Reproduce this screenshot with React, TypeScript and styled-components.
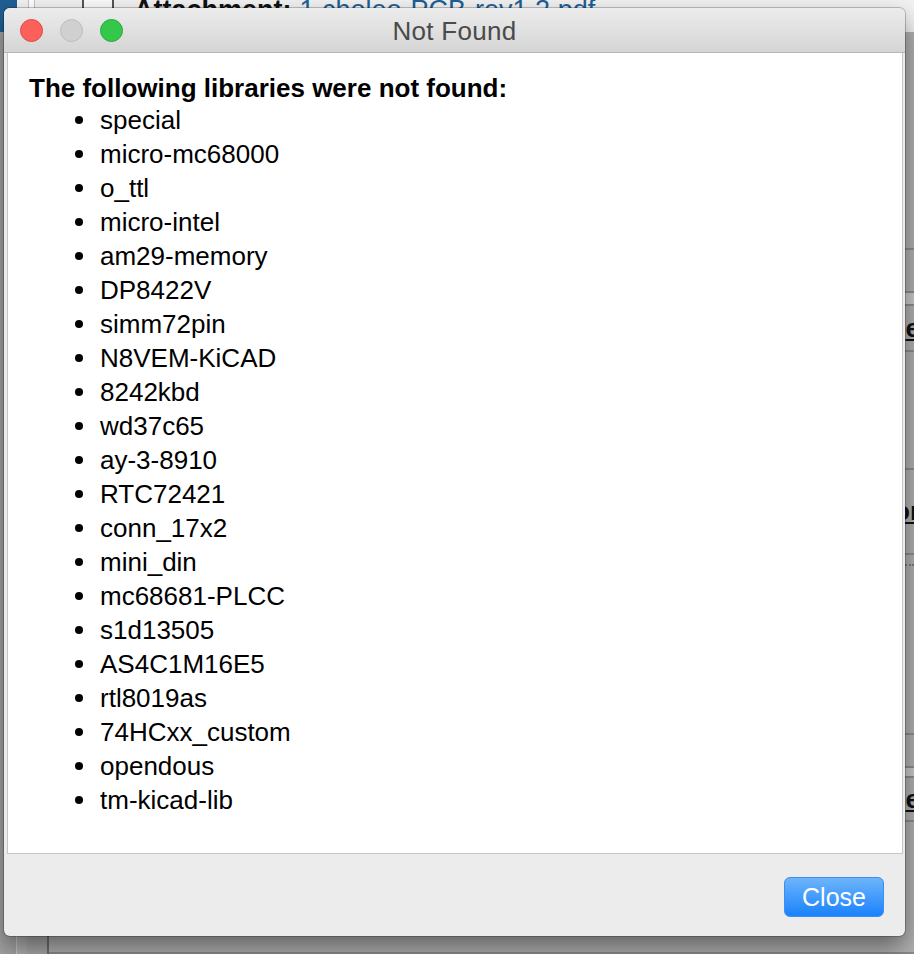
import React from 'react';
import styled, { createGlobalStyle } from 'styled-components';

const GlobalStyle = createGlobalStyle`
  html, body {
    margin: 0;
    padding: 0;
    background: #a9a9a9;
  }
  body {
    font-family: "Liberation Sans", Arial, sans-serif;
  }
`;

const missingLibs = [
  'special',
  'micro-mc68000',
  'o_ttl',
  'micro-intel',
  'am29-memory',
  'DP8422V',
  'simm72pin',
  'N8VEM-KiCAD',
  '8242kbd',
  'wd37c65',
  'ay-3-8910',
  'RTC72421',
  'conn_17x2',
  'mini_din',
  'mc68681-PLCC',
  's1d13505',
  'AS4C1M16E5',
  'rtl8019as',
  '74HCxx_custom',
  'opendous',
  'tm-kicad-lib',
];

// rows of the app window lying behind the dialog (only a sliver shows on the right)
const backRows: Array<{ h: number, text?: string, dotted?: boolean, shade?: boolean }> = [
  { h: 218 },
  { h: 43 },
  { h: 13, shade: true },
  { h: 46, text: 'e' },
  { h: 118 },
  { h: 85, text: 'or' },
  { h: 180, dotted: true },
  { h: 33 },
  { h: 10, shade: true },
  { h: 44, text: 'e' },
  { h: 132 },
];

export default function App() {
  return (
    <Page>
      <GlobalStyle />
      <Backdrop>
        <BackHeader>
          <SideStub />
          <HeaderRule />
          <FileIcon width="36" height="40" viewBox="0 0 36 40">
            <path d="M3 2 H24 L33 11 V38 H3 Z" fill="#fafafa" stroke="#555" strokeWidth="2" />
            <path d="M24 2 V11 H33" fill="none" stroke="#555" strokeWidth="2" />
          </FileIcon>
          <AttachLabel>Attachment:</AttachLabel>
          <AttachLink>1.choleo-PCB-rev1.2.pdf</AttachLink>
        </BackHeader>
        <BackBody>
          <BackGutter />
          <BackColumn />
          <BackMain>
            {backRows.map((row, i) => (
              <BackRow key={i} shade={row.shade} style={{ height: row.h }}>
                {row.text && <BackCell>{row.text}</BackCell>}
                {row.dotted && <Dots />}
              </BackRow>
            ))}
          </BackMain>
        </BackBody>
      </Backdrop>

      <Dialog>
        <TitleBar>
          <Lights>
            <Light color="#fc605b" edge="#de4a44" />
            <Light color="#d0d0d0" edge="#bdbdbd" />
            <Light color="#34c84a" edge="#28a93b" />
          </Lights>
          <Title>Not Found</Title>
          <span />
        </TitleBar>
        <Content>
          <Heading>The following libraries were not found:</Heading>
          <LibList>
            {missingLibs.map(lib => (
              <LibItem key={lib}>{lib}</LibItem>
            ))}
          </LibList>
        </Content>
        <Footer>
          <CloseButton>Close</CloseButton>
        </Footer>
      </Dialog>
    </Page>
  );
}

const Page = styled.div`
  position: relative;
  width: 914px;
  height: 954px;
  overflow: hidden;
`;

const Backdrop = styled.div`
  display: flex;
  flex-direction: column;
  height: 100%;
  background: #adadad;
`;

const BackHeader = styled.div`
  display: flex;
  align-items: center;
  height: 44px;
  margin-top: -12px;
  background: #f2f2f2;
  flex-shrink: 0;
`;

const SideStub = styled.div`
  align-self: stretch;
  width: 17px;
  background: #1f5f93;
`;

const HeaderRule = styled.div`
  align-self: stretch;
  width: 5px;
  margin-left: 11px;
  background: #ffffff;
  border-left: 1px solid #c4c4c4;
  border-right: 1px solid #c4c4c4;
`;

const FileIcon = styled.svg`
  margin-left: 45px;
  margin-top: -6px;
`;

const AttachLabel = styled.span`
  margin-left: 18px;
  font-size: 27px;
  font-weight: bold;
  color: #111;
`;

const AttachLink = styled.span`
  margin-left: 8px;
  font-size: 27px;
  color: #1e5f96;
`;

const BackBody = styled.div`
  display: flex;
  flex: 1;
`;

const BackGutter = styled.div`
  width: 16px;
  background: #a4a4a4;
  border-right: 1px solid #c9c9c9;
`;

const BackColumn = styled.div`
  width: 30px;
  background: #b0b0b0;
  border-right: 2px solid #6f6f6f;
  box-shadow: inset -20px 0 0 #a9a9a9, inset -19px 0 0 #7b8a96;
`;

const BackMain = styled.div`
  flex: 1;
  display: flex;
  flex-direction: column;
  align-items: stretch;
  background: #b5b5b5;
`;

const BackRow = styled.div<{ shade?: boolean }>`
  position: relative;
  box-sizing: border-box;
  display: flex;
  align-items: center;
  justify-content: flex-end;
  flex-shrink: 0;
  background: ${p => (p.shade ? '#c9c9c9' : '#b2b2b2')};
  border-bottom: 2px solid #8d8d8d;
`;

const BackCell = styled.span`
  font-size: 26px;
  font-weight: bold;
  color: #111;
  text-decoration: underline;
  margin-right: -6px;
`;

const Dots = styled.div`
  position: absolute;
  right: 0;
  top: 9px;
  width: 40px;
  border-top: 2px dotted #7d7d7d;
`;

const Dialog = styled.div`
  position: absolute;
  left: 4px;
  top: 8px;
  width: 901px;
  height: 928px;
  display: flex;
  flex-direction: column;
  background: #ececec;
  border-radius: 6px;
  overflow: hidden;
  box-shadow: 0 0 0 1px rgba(0, 0, 0, 0.22), 0 12px 26px rgba(0, 0, 0, 0.45);
`;

const TitleBar = styled.div`
  display: grid;
  grid-template-columns: 1fr auto 1fr;
  align-items: center;
  height: 44px;
  flex-shrink: 0;
  background: linear-gradient(#ececec, #d5d5d5);
  border-bottom: 1px solid #b6b6b6;
`;

const Lights = styled.div`
  display: flex;
  gap: 17px;
  padding-left: 16px;
`;

const Light = styled.span<{ color: string, edge: string }>`
  width: 23px;
  height: 23px;
  border-radius: 50%;
  box-sizing: border-box;
  background: ${p => p.color};
  border: 1px solid ${p => p.edge};
`;

const Title = styled.div`
  font-family: "Liberation Sans", Arial, sans-serif;
  font-size: 26px;
  letter-spacing: 0.3px;
  color: #4a4a4a;
  margin-top: 2px;
`;

const Content = styled.div`
  flex: 1;
  margin: 0 2px 0 3px;
  padding: 20px 0 0 21px;
  background: #ffffff;
  border: 1px solid #c6c6c6;
  border-top: none;
`;

const Heading = styled.div`
  font-size: 26px;
  font-weight: bold;
  line-height: 30px;
  color: #000;
`;

const LibList = styled.ul`
  list-style: none;
  margin: 0;
  padding: 0 0 0 46px;
`;

const LibItem = styled.li`
  display: flex;
  align-items: center;
  height: 34px;
  font-size: 26px;
  color: #000;

  &::before {
    content: "";
    width: 8px;
    height: 8px;
    border-radius: 50%;
    background: #000;
    margin-right: 17px;
    flex-shrink: 0;
  }
`;

const Footer = styled.div`
  display: flex;
  justify-content: flex-end;
  align-items: flex-start;
  height: 82px;
  flex-shrink: 0;
  padding: 23px 21px 0 0;
  box-sizing: border-box;
`;

const CloseButton = styled.button`
  width: 100px;
  height: 40px;
  border-radius: 6px;
  border: 1px solid #3b8ff2;
  background: linear-gradient(#6db5fb, #1a82fb);
  color: #ffffff;
  font-family: "Liberation Sans", Arial, sans-serif;
  font-size: 25px;
  padding: 0;
  cursor: pointer;
`;
